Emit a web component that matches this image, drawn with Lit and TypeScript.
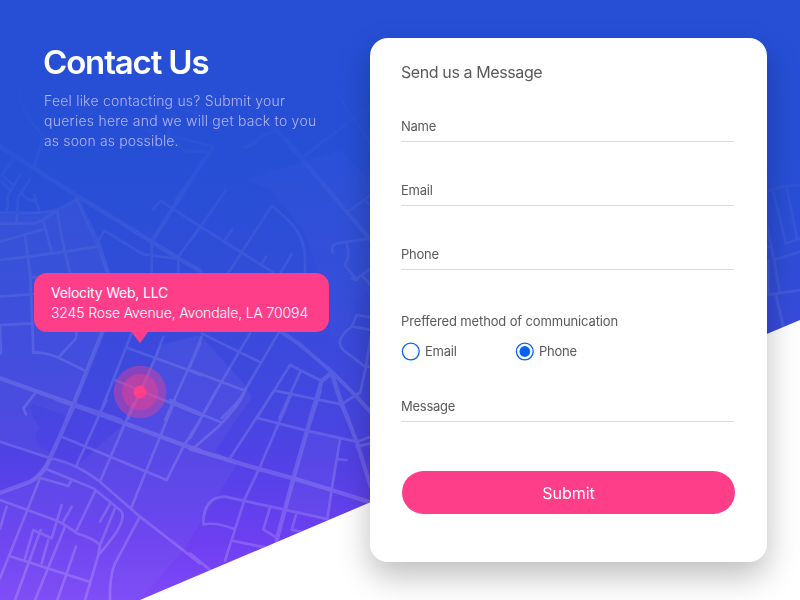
import { LitElement, html, css, svg } from "lit";
import { customElement, property } from "lit/decorators.js";

interface Tile {
  x: number;
  y: number;
  major?: string;
  mid?: string;
  minor: string;
}

// Street network, drawn in tiles at three units per pixel.
const TILES: Tile[] = [
  {
    x: 0, y: 0,
    mid: "M640 440L530 600M830 390L1010 600M730 260L830 390",
    minor:
      "M70 210Q40 290 90 360L130 410L105 490M970 220L1110 430M910 470L1110 320M770 290L920 215M690 320L730 262L770 290M745 440L790 405L830 392M490 265L470 310L600 340M440 390L640 440M520 345L500 410L560 455L615 455M290 260L380 310",
  },
  {
    x: 0, y: 140,
    major: "M0 20L220 160L455 305L535 355L600 392M228 170L295 310L325 400",
    mid: "M602 75L455 305",
    minor:
      "M125 20L105 75M45 50L5 105L40 135M0 120L30 150M60 105L25 165L20 215M90 118L55 170L50 245M65 160Q80 183 108 183Q108 175 103 165M108 183L118 215M0 218L110 218Q160 216 190 200L232 175M0 251L100 250Q125 246 150 225L172 212M0 305L130 268M130 245L155 335M75 285L90 400M0 360L85 350L195 335L290 320M172 215L185 290L210 400M295 302L313 272L430 343L535 357M460 208L482 182L600 260L535 350M535 355L535 400M455 305L455 400M92 412L110 412",
  },
  {
    x: 190, y: 140,
    mid: "M290 0L470 215L542 300",
    minor:
      "M0 240L250 398M108 150L0 305M105 300L127 267M115 398L245 198Q275 220 310 258Q345 298 345 360L345 398M212 375L228 350M272 398L306 342M340 50L402 0M475 215L542 165M525 180L542 200M428 338Q420 314 445 309L542 295M470 310Q482 345 465 375L498 418L542 385M515 405L542 435M0 375L35 398M160 22Q185 22 205 0",
  },
  {
    x: 0, y: 270,
    major: "M0 325L225 405L360 450M308 185L220 405L200 450",
    minor:
      "M90 0L97 160L100 248Q140 247 175 263L255 302M0 80L100 72M0 165L97 160M0 165L3 250M230 185L228 205L175 263M105 370L70 415L78 433M395 190L300 430M345 330L600 435M385 235L565 300L600 315M490 200L465 265L385 445M600 220L495 450",
  },
  {
    x: 190, y: 270,
    major: "M425 308L395 333L360 450M425 308L455 403L475 450",
    mid: "M265 180L325 220L425 305L500 380L545 430",
    minor:
      "M35 190L145 245L208 275M35 200L0 290M180 190L92 340L35 440M265 190L165 360Q155 388 95 445M0 300L165 362M300 285L200 445M300 285L395 333M332 303L268 445M255 362L375 387L455 403L505 370M485 25L500 30M542 142L500 135L485 170Q430 210 460 240L525 290L542 290M490 170L542 180M542 200L528 290L510 370",
  },
  {
    x: 190, y: 390,
    major: "M0 175L200 235L310 265L425 300L542 337M390 0L350 125L310 265L260 450",
    mid: "M440 0L500 155L542 290",
    minor:
      "M165 0Q155 40 85 110L10 175M80 0L0 145M0 60L90 95M250 5L120 205M305 10L208 235L165 325L105 512M205 85L350 122L500 155L542 140M500 170L542 160M450 150L425 300L412 388M445 208L470 210M40 403Q40 320 105 320L280 358L415 388M40 403Q80 396 135 418M130 453L225 472M240 352L220 418L255 440M318 375L305 420L335 425M0 490L60 540",
  },
  {
    x: 0, y: 400,
    major: "M170 -3L220 15L375 70L550 135L600 152M225 8L150 175Q130 225 90 245L0 278",
    minor:
      "M0 125L150 175Q220 185 300 245L420 350L600 490M320 0L300 40L228 200M400 10L375 70L300 245M525 0L395 320M600 60L550 140L500 240L185 110M510 0L600 40M140 208L280 265L360 330Q380 345 350 395Q330 425 295 465M125 235L205 258L215 240M120 235L80 335L0 535M0 300L165 360Q200 375 230 400Q280 415 300 435L295 465L255 600M285 275L230 390M185 315L155 415L100 390L75 475M215 320L190 365M330 312L300 365M345 325L300 435M20 320L0 385M28 468L268 545M122 390L45 600M195 380L105 600M228 440L172 600M145 420L125 490M420 350L345 490Q328 530 330 600",
  },
  {
    x: 700, y: 150,
    minor:
      "M200 125Q240 105 300 105M220 125L258 280L300 265M260 112L292 270M200 225L220 320L240 430M225 328L300 305M200 290L215 290M200 435L300 420M228 435L250 530M205 330L205 430",
  },
];

@customElement("city-map")
export class CityMap extends LitElement {
  static styles = css`
    :host { display: block; }
    svg { display: block; width: 800px; height: 600px; }
    .roads { fill: none; stroke: #fff; stroke-linecap: round; stroke-linejoin: round; }
    .major { stroke-width: 13; }
    .mid { stroke-width: 12; }
    .minor { stroke-width: 8; }
  `;

  render() {
    return html`<svg viewBox="0 0 800 600" aria-hidden="true">
      <defs>
        <linearGradient id="sky" x1="0" y1="0" x2="0" y2="1">
          <stop offset="0" stop-color="#264fd6" />
          <stop offset=".25" stop-color="#264fd6" />
          <stop offset=".45" stop-color="#304dd8" />
          <stop offset=".66" stop-color="#4247df" />
          <stop offset=".76" stop-color="#5042e5" />
          <stop offset=".9" stop-color="#6d3ff1" />
          <stop offset="1" stop-color="#8048f8" />
        </linearGradient>
        <linearGradient id="fade" gradientUnits="userSpaceOnUse" x1="0" y1="60" x2="0" y2="600">
          <stop offset="0" stop-color="#fff" stop-opacity="0" />
          <stop offset=".2" stop-color="#fff" stop-opacity=".03" />
          <stop offset=".4" stop-color="#fff" stop-opacity=".07" />
          <stop offset=".62" stop-color="#fff" stop-opacity=".13" />
          <stop offset="1" stop-color="#fff" stop-opacity=".18" />
        </linearGradient>
        <mask id="roadmask" maskUnits="userSpaceOnUse" x="0" y="0" width="800" height="600">
          <rect width="800" height="600" fill="url(#fade)" />
        </mask>
        <clipPath id="slope"><path d="M0 0H800V320L140 600H0Z" /></clipPath>
      </defs>
      <g clip-path="url(#slope)">
        <rect width="800" height="600" fill="url(#sky)" />
        <g fill="#7a72ea">
          <path d="M0 215L60 210L77 198L109 273L103 333L73 405L0 378Z" opacity=".12" />
          <path d="M0 378L73 405L68 416L32 404Q29 414 40 428Q28 442 50 452V458L0 442Z" opacity=".12" />
          <path d="M125 423L160 345L200 335L245 385L252 397L215 451L237 464L185 548L140 600H0V493L30 482L50 458L76 467Z" opacity=".16" />
          <path d="M245 180L270 190L303 230L330 300V336Q345 344 357 300L370 290V180L340 150Z" opacity=".06" />
          <path d="M307 432L340 439L332 490L327 520L285 508Z" opacity=".14" />
        </g>
        <g mask="url(#roadmask)">
          <g class="roads">
            ${TILES.map(
              (t) => svg`<g transform="translate(${t.x} ${t.y}) scale(.33333)">
                <path class="minor" d=${t.minor} />
                <path class="mid" d=${t.mid ?? ""} />
                <path class="major" d=${t.major ?? ""} />
              </g>`
            )}
          </g>
        </g>
      </g>
    </svg>`;
  }
}

@customElement("map-pin")
export class MapPin extends LitElement {
  static styles = css`
    :host { display: block; width: 295px; }
    .bubble {
      box-sizing: border-box;
      height: 59px;
      padding: 10px 17px;
      border-radius: 13px;
      background: #ff3e8a;
      color: #fff;
      font: 300 14px/20px Inter, "Liberation Sans", sans-serif;
      white-space: nowrap;
    }
    .name { font-weight: 400; letter-spacing: -0.2px; }
    .address { letter-spacing: -0.14px; }
    svg { display: block; margin-left: 79px; }
  `;

  render() {
    return html`
      <div class="bubble">
        <div class="name">Velocity Web, LLC</div>
        <div class="address">3245 Rose Avenue, Avondale, LA 70094</div>
      </div>
      <svg width="54" height="88" viewBox="0 0 54 88" fill="#ff3e8a">
        <path d="M18.5 0H35L27 11Z" />
        <circle cx="27" cy="60" r="26.3" opacity=".38" />
        <circle cx="27" cy="60" r="18" opacity=".38" />
        <circle cx="27" cy="60" r="6.5" />
      </svg>
    `;
  }
}

@customElement("form-field")
export class FormField extends LitElement {
  @property() label = "";

  static styles = css`
    :host {
      display: block;
      box-sizing: border-box;
      height: 28px;
      border-bottom: 1px solid #dcdcdc;
    }
    label { display: block; line-height: 24px; letter-spacing: -0.25px; }
  `;

  render() {
    return html`<label>${this.label}</label>`;
  }
}

@customElement("app-root")
export class AppRoot extends LitElement {
  static styles = css`
    :host {
      display: block;
      position: relative;
      width: 800px;
      height: 600px;
      overflow: hidden;
      background: #fff;
      font-family: Inter, "Liberation Sans", sans-serif;
    }
    city-map { position: absolute; inset: 0; }
    map-pin { position: absolute; left: 34px; top: 273px; }
    .page { position: relative; display: flex; height: 600px; }
    .intro { box-sizing: border-box; width: 370px; padding: 41px 0 0 43px; }
    h1 { margin: 0; font-size: 33px; line-height: 42px; font-weight: 600; letter-spacing: -1.15px; color: #fff; white-space: nowrap; }
    .lead { margin: 8px 0 0 1px; font-size: 14px; line-height: 20px; font-weight: 300; color: #b2b4f6; white-space: nowrap; }
    .l1 { letter-spacing: 0.21px; }
    .l2 { letter-spacing: 0.24px; }
    .l3 { letter-spacing: 0.14px; }
    .card {
      box-sizing: border-box;
      width: 397px;
      height: 524px;
      margin-top: 38px;
      padding: 22px 32px 0 31px;
      border-radius: 18px;
      background: #fff;
      box-shadow: 0 14px 32px rgba(0, 0, 0, 0.26);
      color: #5a5a5a;
      font-size: 13px;
      display: flex;
      flex-direction: column;
    }
    h2 { margin: 0 0 30px; font-size: 16px; line-height: 24px; font-weight: 400; letter-spacing: -0.4px; }
    .fields { display: flex; flex-direction: column; gap: 36px; margin-right: 1px; }
    .legend { margin-top: 39px; line-height: 24px; letter-spacing: -0.14px; }
    .options { display: flex; margin-top: 8px; height: 20px; }
    .option { display: flex; align-items: center; gap: 5px; width: 114px; letter-spacing: -0.25px; }
    .message { margin: 33px 1px 0 0; }
    button {
      margin: 49px 0 0 1px;
      height: 43px;
      border: 0;
      border-radius: 22px;
      background: #ff3e8a;
      color: #fff;
      font: 400 16px Inter, "Liberation Sans", sans-serif;
    }
  `;

  private radio(label: string, checked: boolean) {
    return html`<div class="option">
      <svg width="19" height="19" viewBox="0 0 19 19">
        <circle cx="9.8" cy="9.5" r="8.4" fill="#fff" stroke="#0a62f0" stroke-width="1.3" />
        ${checked ? svg`<circle cx="9.8" cy="9.5" r="5.4" fill="#0a62f0" />` : ""}
      </svg>
      <span>${label}</span>
    </div>`;
  }

  render() {
    return html`
      <city-map></city-map>
      <map-pin></map-pin>
      <div class="page">
        <section class="intro">
          <h1>Contact Us</h1>
          <p class="lead">
            <span class="l1">Feel like contacting us? Submit your</span><br />
            <span class="l2">queries here and we will get back to you</span><br />
            <span class="l3">as soon as possible.</span>
          </p>
        </section>
        <form class="card">
          <h2>Send us a Message</h2>
          <div class="fields">
            <form-field label="Name"></form-field>
            <form-field label="Email"></form-field>
            <form-field label="Phone"></form-field>
          </div>
          <div class="legend">Preffered method of communication</div>
          <div class="options">${this.radio("Email", false)}${this.radio("Phone", true)}</div>
          <form-field class="message" label="Message"></form-field>
          <button type="button">Submit</button>
        </form>
      </div>
    `;
  }
}
